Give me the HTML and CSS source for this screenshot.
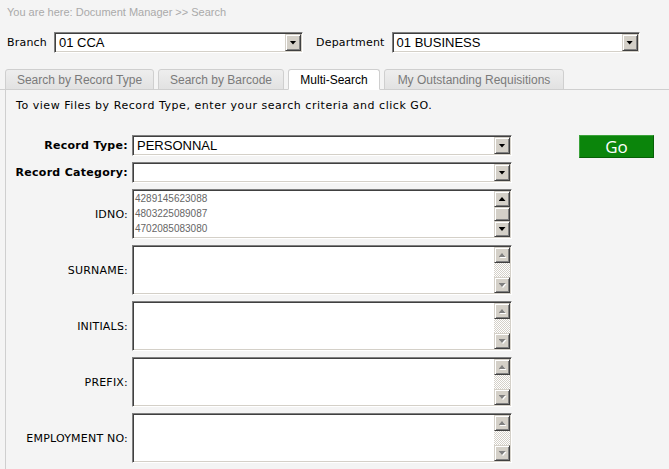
FILE: index.html
```html
<!DOCTYPE html>
<html>
<head>
<meta charset="utf-8">
<title>Document Manager - Search</title>
<link rel="stylesheet" href="styles.css">
</head>
<body>
<div class="crumb">You are here: Document Manager &gt;&gt; Search</div>

<div class="filters">
  <span class="flabel">Branch</span>
  <div class="select sel-branch"><span class="val">01 CCA</span><span class="btn"><i class="arr down"></i></span></div>
  <span class="flabel dept">Department</span>
  <div class="select sel-dept"><span class="val">01 BUSINESS</span><span class="btn"><i class="arr down"></i></span></div>
</div>

<div class="tabs">
  <div class="tab t1">Search by Record Type</div>
  <div class="tab t2">Search by Barcode</div>
  <div class="tab t3 active">Multi-Search</div>
  <div class="tab t4">My Outstanding Requisitions</div>
</div>

<div class="panel">
  <p class="intro">To view Files by Record Type, enter your search criteria and click GO.</p>
  <div class="form">
    <div class="lbl strong">Record Type:</div>
    <div class="select"><span class="val">PERSONNAL</span><span class="btn"><i class="arr down"></i></span></div>
    <div class="go-cell"><button class="go" type="button">Go</button></div>

    <div class="lbl strong">Record Category:</div>
    <div class="select"><span class="val"></span><span class="btn"><i class="arr down"></i></span></div>
    <div></div>

    <div class="lbl">IDNO:</div>
    <div class="box">
      <div class="list">
        <div class="item">4289145623088</div>
        <div class="item">4803225089087</div>
        <div class="item">4702085083080</div>
      </div>
      <div class="sbar">
        <span class="btn"><i class="arr up"></i></span>
        <span class="btn thumb"></span>
        <span class="btn"><i class="arr down"></i></span>
      </div>
    </div>
    <div></div>

    <div class="lbl">SURNAME:</div>
    <div class="box"><textarea class="ta"></textarea><div class="sbar"><span class="btn"><span class="dis"><i class="arr up grey"></i></span></span><span class="track"></span><span class="btn"><span class="dis"><i class="arr down grey"></i></span></span></div></div>
    <div></div>

    <div class="lbl">INITIALS:</div>
    <div class="box"><textarea class="ta"></textarea><div class="sbar"><span class="btn"><span class="dis"><i class="arr up grey"></i></span></span><span class="track"></span><span class="btn"><span class="dis"><i class="arr down grey"></i></span></span></div></div>
    <div></div>

    <div class="lbl">PREFIX:</div>
    <div class="box"><textarea class="ta"></textarea><div class="sbar"><span class="btn"><span class="dis"><i class="arr up grey"></i></span></span><span class="track"></span><span class="btn"><span class="dis"><i class="arr down grey"></i></span></span></div></div>
    <div></div>

    <div class="lbl">EMPLOYMENT NO:</div>
    <div class="box"><textarea class="ta"></textarea><div class="sbar"><span class="btn"><span class="dis"><i class="arr up grey"></i></span></span><span class="track"></span><span class="btn"><span class="dis"><i class="arr down grey"></i></span></span></div></div>
    <div></div>
  </div>
</div>
</body>
</html>
```

FILE: styles.css
```css
html, body {
  margin: 0;
  padding: 0;
  background: #f4f4f4;
  height: 100%;
  overflow: hidden;
}
body {
  font-family: "DejaVu Sans", Verdana, sans-serif;
  font-size: 11px;
  color: #000;
}

.crumb {
  font-family: "Liberation Sans", Arial, sans-serif;
  font-size: 11px;
  line-height: 14px;
  color: #aaa;
  padding: 5px 0 0 7px;
}

.filters {
  display: flex;
  align-items: center;
  margin-top: 13px;
  padding-left: 7px;
  height: 21px;
}
.flabel {
  font-size: 11px;
  letter-spacing: 0.2px;
  margin-right: 7px;
}
.flabel.dept {
  margin-left: 13px;
  margin-right: 7px;
}

/* inset field */
.select, .box {
  box-sizing: border-box;
  background: #fff;
  border: 1px solid;
  border-color: #808080 #fff #fff #808080;
  box-shadow: inset 1px 1px 0 #404040, inset -1px -1px 0 #d4d0c8;
  padding: 1px;
  display: flex;
}
.select {
  height: 21px;
  width: 380px;
  align-items: stretch;
}
.sel-branch { width: 249px; }
.sel-dept { width: 248px; }
.select .val {
  flex: 1;
  font-family: "Liberation Sans", Arial, sans-serif;
  font-size: 13px;
  line-height: 17px;
  padding-left: 3px;
  white-space: nowrap;
  overflow: hidden;
}

/* classic raised button */
.btn {
  box-sizing: border-box;
  display: flex;
  align-items: center;
  justify-content: center;
  width: 16px;
  height: 16px;
  flex: none;
  background: #d4d0c8;
  border: 1px solid;
  border-color: #d4d0c8 #404040 #404040 #d4d0c8;
  box-shadow: inset 1px 1px 0 #fff, inset -1px -1px 0 #808080;
}
.select .btn {
  height: 17px;
}

.arr {
  display: block;
  width: 7px;
  height: 4px;
  background: #000;
}
.arr.down { clip-path: polygon(0 0, 100% 0, 50% 100%); }
.arr.up { clip-path: polygon(50% 0, 100% 100%, 0 100%); }
.arr.grey { background: #808080; }
.dis {
  display: block;
  filter: drop-shadow(1px 1px 0 #fff);
}

/* tabs */
.tabs {
  display: flex;
  gap: 4px;
  margin-top: 16px;
  padding-left: 5px;
  border-bottom: 1px solid #cfcfcf;
  height: 20px;
}
.tab {
  box-sizing: border-box;
  height: 21px;
  margin-bottom: -1px;
  border: 1px solid #cfcfcf;
  border-radius: 3px 3px 0 0;
  background: linear-gradient(#eeeeee, #e2e2e2);
  font-family: "Liberation Sans", Arial, sans-serif;
  font-size: 12px;
  line-height: 20px;
  color: #7a7a7a;
  text-align: center;
}
.t1 { width: 149px; }
.t2 { width: 126px; }
.t3 { width: 92px; }
.t4 { width: 180px; }
.tab.active {
  background: #fff;
  color: #000;
  border-bottom-color: #fff;
}

/* panel */
.panel {
  margin-left: 5px;
  border-left: 1px solid #cfcfcf;
  height: 400px;
}
.intro {
  margin: 0;
  padding: 9px 0 0 10px;
  font-size: 11px;
  line-height: 14px;
  letter-spacing: 0.54px;
}
.form {
  display: grid;
  grid-template-columns: 122px 380px auto;
  grid-template-rows: 21px 21px 50px 50px 50px 50px 50px;
  column-gap: 4px;
  row-gap: 6px;
  margin-top: 22px;
}
.lbl {
  display: flex;
  align-items: center;
  justify-content: flex-end;
  font-size: 11px;
  letter-spacing: 0.2px;
}
.lbl.strong {
  font-weight: bold;
  letter-spacing: 0.3px;
}

.go-cell { padding-left: 63px; }
.go {
  box-sizing: border-box;
  width: 75px;
  height: 23px;
  margin: 0;
  padding: 0;
  background: #0b850b;
  border: 1px solid;
  border-color: #3aa23a #066006 #066006 #3aa23a;
  color: #fff;
  font-family: "Open Sans", "DejaVu Sans", sans-serif;
  font-size: 17px;
  line-height: 20px;
}

.box {
  height: 50px;
  width: 380px;
}
.ta {
  flex: 1;
  border: 0;
  margin: 0;
  padding: 0;
  resize: none;
  outline: none;
  background: #fff;
}
.list {
  flex: 1;
  overflow: hidden;
  padding-left: 1px;
}
.item {
  font-family: "Liberation Sans", Arial, sans-serif;
  font-size: 10px;
  line-height: 15px;
  color: #666;
  letter-spacing: 0px;
}
.sbar {
  display: flex;
  flex-direction: column;
  width: 16px;
}
.sbar .track {
  flex: 1;
  background: repeating-conic-gradient(#d4d0c8 0 25%, #fff 0 50%) 0 0 / 2px 2px;
}
.sbar .thumb {
  flex: 1;
  height: auto;
}
```
